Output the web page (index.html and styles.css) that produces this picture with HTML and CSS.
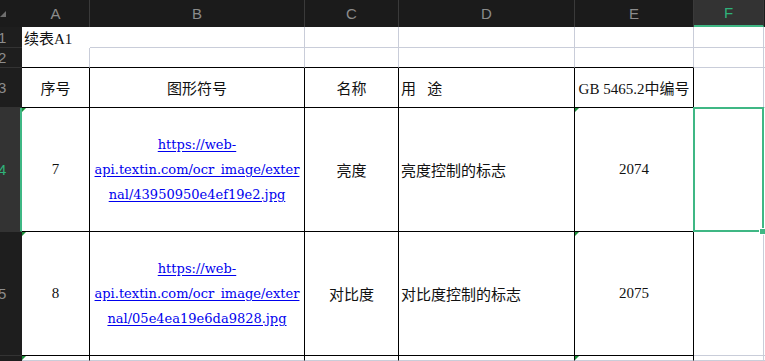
FILE: index.html
```html
<!DOCTYPE html>
<html lang="zh">
<head>
<meta charset="utf-8">
<title>Sheet</title>
<link rel="stylesheet" href="styles.css">
</head>
<body>
<div class="sheet">
  <div class="corner"><span class="corner-tri"></span></div>
  <div class="ch">A</div>
  <div class="ch">B</div>
  <div class="ch">C</div>
  <div class="ch">D</div>
  <div class="ch">E</div>
  <div class="ch ch-sel">F</div>
  <div class="ch ch-end"></div>

  <div class="rh">1</div>
  <div class="c left nor nob">续表A1</div>
  <div class="c"></div>
  <div class="c"></div>
  <div class="c"></div>
  <div class="c"></div>
  <div class="c"></div>
  <div class="c end"></div>

  <div class="rh">2</div>
  <div class="c tb"></div>
  <div class="c tb"></div>
  <div class="c tb"></div>
  <div class="c tb"></div>
  <div class="c tb"></div>
  <div class="c"></div>
  <div class="c end"></div>

  <div class="rh">3</div>
  <div class="c t tb">序号</div>
  <div class="c t tb">图形符号</div>
  <div class="c t tb">名称</div>
  <div class="c t tb left pre">用   途</div>
  <div class="c t tb">GB 5465.2中编号</div>
  <div class="c"></div>
  <div class="c end"></div>

  <div class="rh rh-sel">4</div>
  <div class="c t tb tri">7</div>
  <div class="c t tb"><a class="link" href="#">https://web-<br>api.textin.com/ocr_image/exter<br>nal/43950950e4ef19e2.jpg</a></div>
  <div class="c t tb">亮度</div>
  <div class="c t tb left">亮度控制的标志</div>
  <div class="c t tb tri">2074</div>
  <div class="c selected"><span class="handle"></span></div>
  <div class="c end"></div>

  <div class="rh">5</div>
  <div class="c t tb tri">8</div>
  <div class="c t tb"><a class="link" href="#">https://web-<br>api.textin.com/ocr_image/exter<br>nal/05e4ea19e6da9828.jpg</a></div>
  <div class="c t tb">对比度</div>
  <div class="c t tb left">对比度控制的标志</div>
  <div class="c t tb tri">2075</div>
  <div class="c"></div>
  <div class="c end"></div>

  <div class="rh rh-last"></div>
  <div class="c t tri"></div>
  <div class="c t"></div>
  <div class="c t"></div>
  <div class="c t"></div>
  <div class="c t tri"></div>
  <div class="c"></div>
  <div class="c end"></div>
</div>
</body>
</html>
```

FILE: styles.css
```css
* { box-sizing: border-box; }
html, body { margin: 0; padding: 0; background: #fff; }
body { width: 765px; height: 361px; overflow: hidden; }

.sheet {
  display: grid;
  grid-template-columns: 22px 68px 215px 94px 176px 119px 70px 1px;
  grid-template-rows: 27px 21px 20px 40px 124px 124px 5px;
  font-family: "Liberation Serif", "Noto Sans CJK SC", serif;
  font-size: 15px;
  color: #111;
}

.corner {
  background: #1b1b1b;
  position: relative;
}
.corner-tri {
  position: absolute;
  left: 0;
  top: 11px;
  width: 0;
  height: 0;
  border-left: 6px solid transparent;
  border-bottom: 6px solid #6e6e6e;
}

.ch {
  background: #1b1b1b;
  color: #8c8c8c;
  font-family: "Liberation Sans", Arial, sans-serif;
  font-size: 15px;
  display: flex;
  align-items: center;
  justify-content: center;
  border-right: 1px solid #3a3a3a;
}
.ch-sel {
  background: #333;
  color: #2fb27a;
  border-bottom: 2px solid #3fb784;
  border-right: 1px solid #3a3a3a;
}
.ch-end { border-right: none; }

.rh {
  background: #1e1e1e;
  color: #8c8c8c;
  font-family: "Liberation Sans", Arial, sans-serif;
  font-size: 15px;
  display: flex;
  align-items: center;
  overflow: hidden;
  padding-left: 0;
  text-indent: -2px;
  border-bottom: 1px solid #333;
}
.rh-sel {
  background: #333;
  color: #2fb27a;
  border-right: 2px solid #3fb784;
}
.rh-last { border-bottom: none; }

.c {
  background: #fff;
  border-right: 1px solid #c9cdd9;
  border-bottom: 1px solid #c9cdd9;
  display: flex;
  align-items: center;
  justify-content: center;
  text-align: center;
  position: relative;
  white-space: nowrap;
}
.c.t { border-right-color: #000; }
.c.tb { border-bottom-color: #000; }
.c.left { justify-content: flex-start; padding-left: 2px; }
.c.nor { border-right: none; }
.c.nob { border-bottom: none; }
.c.end { border-right: none; }
.pre { white-space: pre; }

.tri::before {
  content: "";
  position: absolute;
  left: 0;
  top: 0;
  width: 0;
  height: 0;
  border-top: 4px solid #1d8f3a;
  border-right: 4px solid transparent;
}

.link {
  font-family: "DejaVu Serif", "Liberation Serif", serif;
  font-size: 13px;
  line-height: 25px;
  color: #0000ee;
  text-decoration: underline;
  text-underline-offset: 2px;
}

.selected::after {
  content: "";
  position: absolute;
  left: -1px;
  top: -1px;
  right: -1px;
  bottom: -1px;
  border: 2px solid #3fb784;
  pointer-events: none;
}
.handle {
  position: absolute;
  right: -3px;
  bottom: -4px;
  width: 7px;
  height: 7px;
  background: #3fb784;
  border: 1px solid #fff;
  z-index: 2;
}
```
